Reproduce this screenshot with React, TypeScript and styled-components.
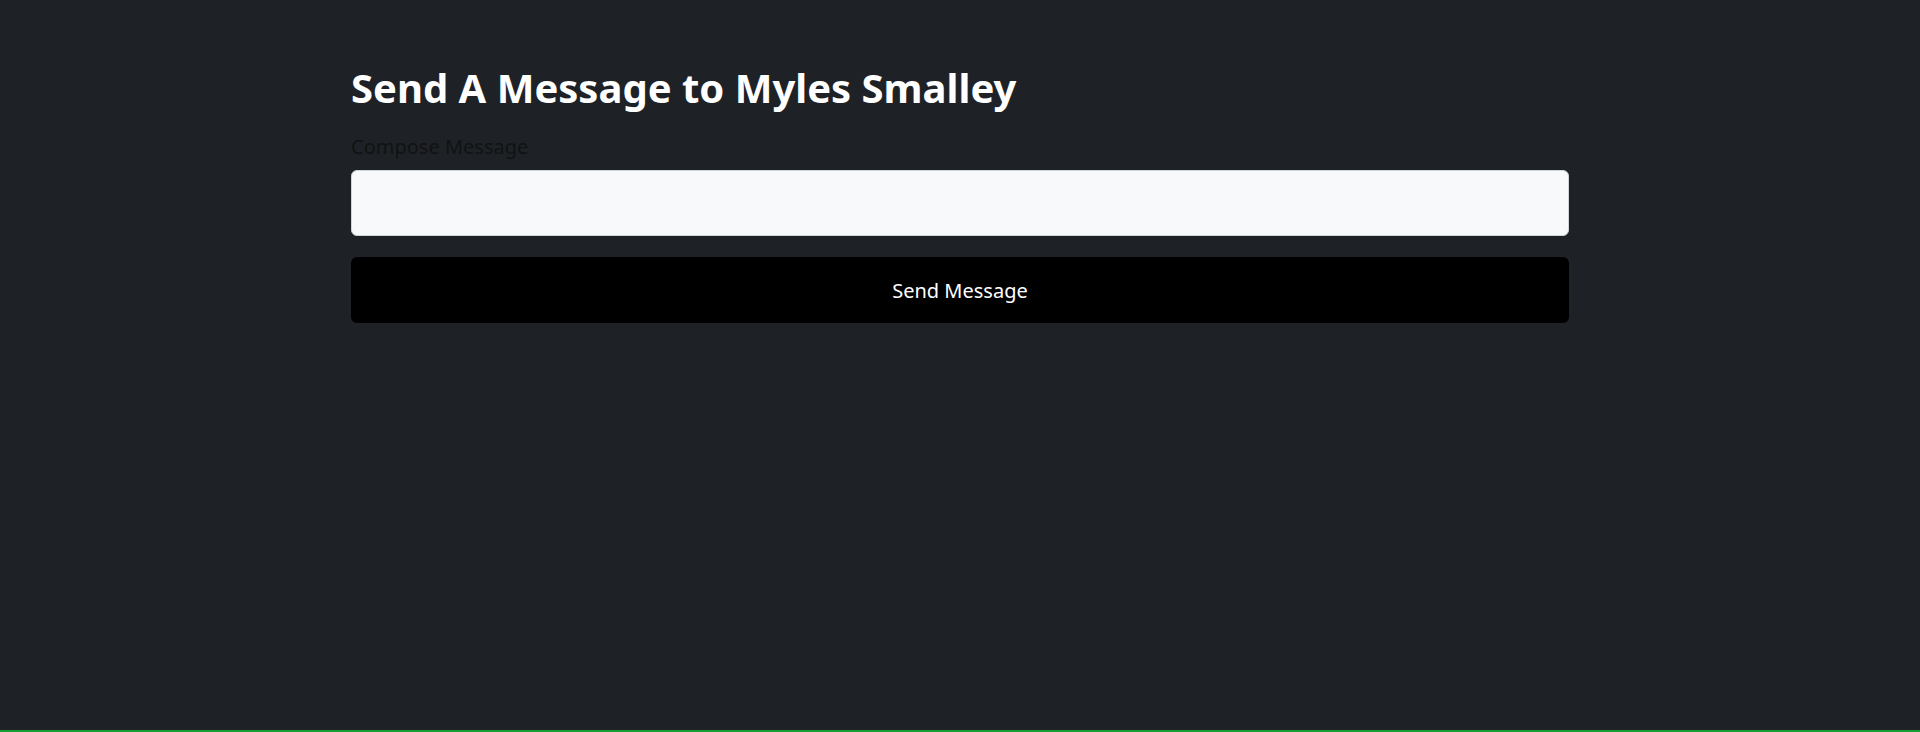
import styled, { createGlobalStyle } from "styled-components";

const GlobalStyle = createGlobalStyle`
  * {
    box-sizing: border-box;
  }

  body {
    margin: 0;
    background-color: #1e2226;
    font-family: "Noto Sans", "Open Sans", sans-serif;
  }
`;

const Page = styled.div`
  min-height: 732px;
  background-color: #1e2226;
  border-bottom: 2px solid #15a034;
  padding-top: 64px;
`;

const Container = styled.main`
  width: 1218px;
  margin: 0 auto;
  display: flex;
  flex-direction: column;
`;

const Title = styled.h1`
  margin: 0 0 23px;
  color: #ffffff;
  font-size: 40px;
  font-weight: 700;
  line-height: 48px;
`;

const Label = styled.label`
  color: #111213;
  font-size: 20px;
  line-height: 24px;
  margin-bottom: 11px;
`;

const MessageInput = styled.input`
  width: 100%;
  height: 66px;
  border: 1px solid #ced4da;
  border-radius: 6px;
  background-color: #f8f9fa;
  padding: 0 16px;
  font-family: inherit;
  font-size: 20px;
  outline: none;
`;

const SendButton = styled.button`
  width: 100%;
  height: 66px;
  margin-top: 21px;
  border: none;
  border-radius: 6px;
  background-color: #000000;
  color: #ffffff;
  font-family: inherit;
  font-size: 20px;
  cursor: pointer;
`;

const App = () => {
  return (
    <>
      <GlobalStyle />
      <Page>
        <Container>
          <Title>Send A Message to Myles Smalley</Title>
          <Label htmlFor="message">Compose Message</Label>
          <MessageInput id="message" type="text" />
          <SendButton type="button">Send Message</SendButton>
        </Container>
      </Page>
    </>
  );
};

export default App;
